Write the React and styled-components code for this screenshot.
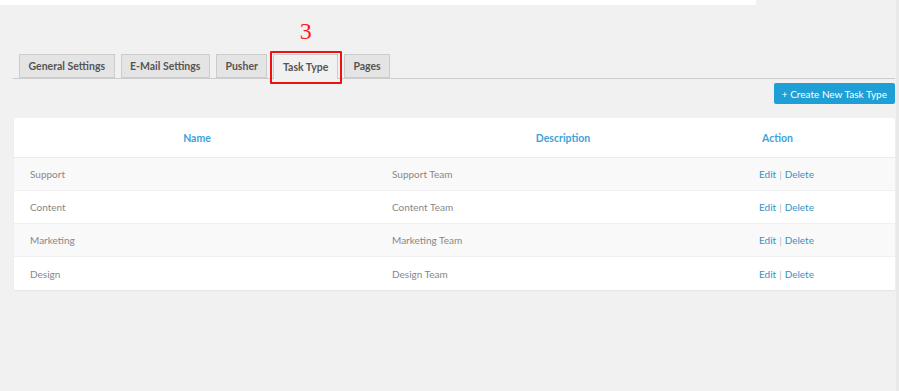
import React from "react";
import styled, { createGlobalStyle } from "styled-components";

const GlobalStyle = createGlobalStyle`
  html, body {
    margin: 0;
    padding: 0;
    background: #f1f1f1;
    font-family: Lato, "Open Sans", "Liberation Sans", sans-serif;
  }
  * {
    box-sizing: border-box;
  }
`;

const taskTypes = [
  { name: "Support", description: "Support Team" },
  { name: "Content", description: "Content Team" },
  { name: "Marketing", description: "Marketing Team" },
  { name: "Design", description: "Design Team" },
];

const tabs = ["General Settings", "E-Mail Settings", "Pusher", "Task Type", "Pages"];

const App = () => {
  return (
    <>
      <GlobalStyle />
      <StPage>
        <StMain>
          <StTopBar />
          <StContent>
            <StTabList>
              {tabs.map((tab) => (
                <StTab key={tab} active={tab === "Task Type"}>
                  {tab}
                  {tab === "Task Type" && (
                    <>
                      <StStepNumber>3</StStepNumber>
                      <StHighlight />
                    </>
                  )}
                </StTab>
              ))}
            </StTabList>
            <StToolbar>
              <StCreateButton>+ Create New Task Type</StCreateButton>
            </StToolbar>
            <StCard>
              <StHeaderRow>
                <StHeadCell align="center">Name</StHeadCell>
                <StHeadCell align="center">Description</StHeadCell>
                <StHeadCell pad="16px">Action</StHeadCell>
              </StHeaderRow>
              {taskTypes.map((item, i) => (
                <StRow key={item.name} striped={i % 2 === 0}>
                  <StCell pad="16px">{item.name}</StCell>
                  <StCell pad="12px">{item.description}</StCell>
                  <StCell pad="13px">
                    <StLink>Edit</StLink>
                    <StDivider>|</StDivider>
                    <StLink>Delete</StLink>
                  </StCell>
                </StRow>
              ))}
            </StCard>
          </StContent>
        </StMain>
        <StGutter />
      </StPage>
    </>
  );
};

export default App;

const StPage = styled.div`
  display: flex;
  min-height: 391px;
`;

const StMain = styled.div`
  flex: 1;
`;

const StGutter = styled.div`
  width: 3px;
  background: #e9e9e9;
`;

const StTopBar = styled.div`
  width: 756px;
  height: 5px;
  background: #ffffff;
`;

const StContent = styled.div`
  padding: 49px 1px 0 13px;
`;

const StTabList = styled.div`
  display: flex;
  gap: 6px;
  padding-left: 6px;
  height: 25px;
  border-bottom: 1px solid #cccccc;
`;

const StTab = styled.div`
  position: relative;
  display: flex;
  align-items: center;
  padding: 0 8.5px;
  height: ${(p) => (p.active ? "25px" : "24px")};
  border: 1px solid #cccccc;
  border-bottom: ${(p) => (p.active ? "none" : "1px solid #cccccc")};
  background: ${(p) => (p.active ? "#f1f1f1" : "#e4e4e4")};
  color: #555555;
  font-size: 10.5px;
  font-weight: 700;
  white-space: nowrap;
`;

const StStepNumber = styled.span`
  position: absolute;
  left: 50%;
  top: -36px;
  transform: translateX(-50%);
  color: #ff1a1a;
  font-family: "Liberation Serif", serif;
  font-size: 24px;
  font-weight: 400;
  line-height: 24px;
`;

const StHighlight = styled.span`
  position: absolute;
  left: -4px;
  top: -4px;
  right: -5px;
  height: 33px;
  border: 2px solid #ee1111;
  border-radius: 1px;
`;

const StToolbar = styled.div`
  display: flex;
  justify-content: flex-end;
  margin-top: 4px;
`;

const StCreateButton = styled.button`
  height: 21px;
  padding: 0 8px;
  border: none;
  border-radius: 2px;
  background: #1e9fd6;
  color: #ffffff;
  font-family: Lato, "Open Sans", sans-serif;
  font-size: 10px;
  cursor: pointer;
`;

const StCard = styled.div`
  margin-top: 14px;
  margin-left: 1px;
  background: #ffffff;
  border-radius: 2px;
  box-shadow: 0 1px 2px rgba(0, 0, 0, 0.06);
  overflow: hidden;
`;

const StHeaderRow = styled.div`
  display: grid;
  grid-template-columns: 366px 366px 1fr;
  align-items: center;
  height: 40px;
  border-bottom: 1px solid #ececec;
`;

const StHeadCell = styled.div`
  text-align: ${(p) => p.align || "left"};
  padding-left: ${(p) => p.pad || "0"};
  color: #3ea2d8;
  font-size: 10.5px;
  font-weight: 700;
`;

const StRow = styled.div`
  display: grid;
  grid-template-columns: 366px 366px 1fr;
  align-items: center;
  height: 33px;
  background: ${(p) => (p.striped ? "#f9f9f9" : "#ffffff")};
  border-bottom: 1px solid #f0f0f0;
  &:last-child {
    border-bottom: none;
  }
`;

const StCell = styled.div`
  padding-left: ${(p) => p.pad};
  color: #888888;
  font-size: 10px;
  font-weight: 400;
`;

const StLink = styled.a`
  color: #3393c8;
  cursor: pointer;
`;

const StDivider = styled.span`
  margin: 0 3px;
  color: #bbbbbb;
`;
